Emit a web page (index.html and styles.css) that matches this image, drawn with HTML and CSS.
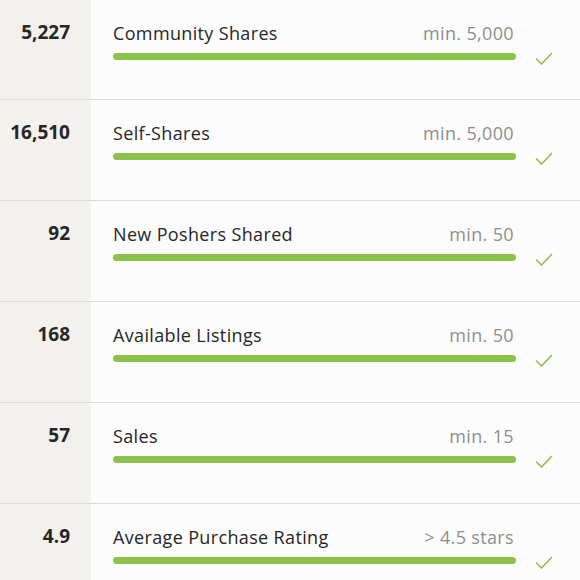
FILE: index.html
```html
<!DOCTYPE html>
<html lang="en">
<head>
    <meta charset="UTF-8">
    <title>Posh Ambassador requirements</title>
    <link rel="stylesheet" href="styles.css">
</head>
<body>

<div class="stats">
    <div class="row">
        <div class="value">5,227</div>
        <div class="info">
            <div class="head"><span class="label">Community Shares</span><span class="min">min. 5,000</span></div>
            <div class="progress"><div class="bar"></div><svg class="check" viewBox="0 0 18 13"><path d="M1 6.5l5.5 5.5L17 1"/></svg></div>
        </div>
    </div>
    <div class="row">
        <div class="value">16,510</div>
        <div class="info">
            <div class="head"><span class="label">Self-Shares</span><span class="min">min. 5,000</span></div>
            <div class="progress"><div class="bar"></div><svg class="check" viewBox="0 0 18 13"><path d="M1 6.5l5.5 5.5L17 1"/></svg></div>
        </div>
    </div>
    <div class="row">
        <div class="value">92</div>
        <div class="info">
            <div class="head"><span class="label">New Poshers Shared</span><span class="min">min. 50</span></div>
            <div class="progress"><div class="bar"></div><svg class="check" viewBox="0 0 18 13"><path d="M1 6.5l5.5 5.5L17 1"/></svg></div>
        </div>
    </div>
    <div class="row">
        <div class="value">168</div>
        <div class="info">
            <div class="head"><span class="label">Available Listings</span><span class="min">min. 50</span></div>
            <div class="progress"><div class="bar"></div><svg class="check" viewBox="0 0 18 13"><path d="M1 6.5l5.5 5.5L17 1"/></svg></div>
        </div>
    </div>
    <div class="row">
        <div class="value">57</div>
        <div class="info">
            <div class="head"><span class="label">Sales</span><span class="min">min. 15</span></div>
            <div class="progress"><div class="bar"></div><svg class="check" viewBox="0 0 18 13"><path d="M1 6.5l5.5 5.5L17 1"/></svg></div>
        </div>
    </div>
    <div class="row">
        <div class="value">4.9</div>
        <div class="info">
            <div class="head"><span class="label">Average Purchase Rating</span><span class="min">&gt; 4.5 stars</span></div>
            <div class="progress"><div class="bar"></div><svg class="check" viewBox="0 0 18 13"><path d="M1 6.5l5.5 5.5L17 1"/></svg></div>
        </div>
    </div>
</div>

</body>
</html>
```

FILE: styles.css
```css
body {
    margin: 0;
    font-family: "Open Sans", Lato, sans-serif;
    background-color: #fdfcfc;
    color: #262626;
}
.stats {
    overflow: hidden;
    height: 580px;
}
.row {
    display: grid;
    grid-template-columns: 91px 1fr;
    height: 100px;
    border-bottom: 1px solid #dcdbd9;
}
.row:first-child {
    height: 99px;
}
.value {
    background-color: #f3f1ee;
    text-align: right;
    padding-right: 21px;
    padding-top: 20px;
    font-size: 19px;
    font-weight: 700;
    line-height: 24px;
}
.info {
    padding: 20px 0 0 22px;
}
.head {
    display: flex;
    justify-content: space-between;
    width: 401px;
    line-height: 26px;
    font-size: 18px;
    letter-spacing: 0.35px;
}
.min {
    color: #8e8e8e;
}
.progress {
    display: flex;
    align-items: flex-start;
    margin-top: 7px;
}
.bar {
    width: 403px;
    height: 7px;
    border-radius: 4px;
    background-color: #8bc34a;
}
.check {
    width: 18px;
    height: 13px;
    margin: -1px 0 0 19px;
    fill: none;
    stroke: #8bc34a;
    stroke-width: 1.6;
}
```
